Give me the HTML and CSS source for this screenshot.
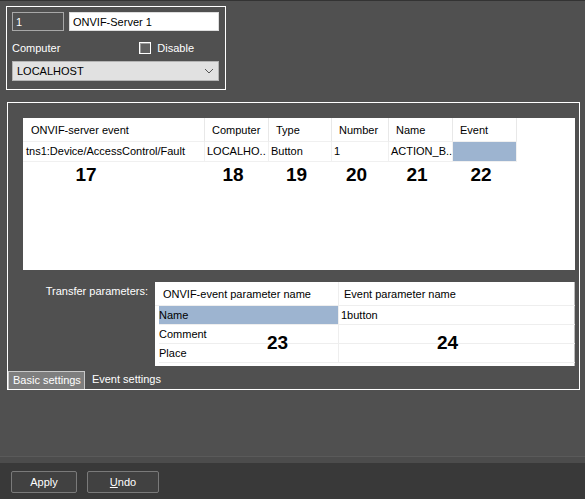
FILE: index.html
```html
<!DOCTYPE html>
<html lang="en">
<head>
    <title>ONVIF-Server settings</title>
    <meta charset="UTF-8">
    <link rel="stylesheet" href="styles.css">
</head>
<body>
<div class="workspace">

    <!-- Server object -->
    <div class="server-box">
        <div class="row">
            <div class="field field-id">1</div>
            <div class="field field-name">ONVIF-Server 1</div>
        </div>
        <div class="row row-computer">
            <span class="label">Computer</span>
            <span class="check"><span class="check-box"></span>Disable</span>
        </div>
        <div class="select">
            <span>LOCALHOST</span>
            <svg width="10" height="6" viewBox="0 0 10 6"><path d="M1 1 L5 5 L9 1" fill="none" stroke="#555" stroke-width="1"/></svg>
        </div>
    </div>

    <!-- Events -->
    <div class="settings-box">
        <div class="events">
            <div class="ev-grid">
                <div class="ev-head">ONVIF-server event</div>
                <div class="ev-head">Computer</div>
                <div class="ev-head">Type</div>
                <div class="ev-head">Number</div>
                <div class="ev-head">Name</div>
                <div class="ev-head">Event</div>

                <div class="ev-cell">tns1:Device/AccessControl/Fault</div>
                <div class="ev-cell">LOCALHO..</div>
                <div class="ev-cell">Button</div>
                <div class="ev-cell">1</div>
                <div class="ev-cell">ACTION_B..</div>
                <div class="ev-cell selected"></div>

                <div class="mark mark-first">17</div>
                <div class="mark">18</div>
                <div class="mark">19</div>
                <div class="mark">20</div>
                <div class="mark">21</div>
                <div class="mark">22</div>
            </div>
        </div>

        <div class="transfer">
            <div class="transfer-label">Transfer parameters:</div>
            <div class="params">
                <div class="p-head">ONVIF-event parameter name</div>
                <div class="p-head">Event parameter name</div>
                <div class="p-cell selected">Name</div>
                <div class="p-cell">1button</div>
                <div class="p-cell">Comment</div>
                <div class="p-cell p-mark"><span class="mark">24</span></div>
                <div class="p-cell p-mark-left">Place<span class="mark">23</span></div>
                <div class="p-cell"></div>
            </div>
        </div>

        <div class="tabs">
            <div class="tab active">Basic settings</div>
            <div class="tab">Event settings</div>
        </div>
    </div>
</div>

<div class="footer">
    <button class="btn btn-apply">Apply</button>
    <button class="btn btn-undo"><u>U</u>ndo</button>
</div>
</body>
</html>
```
FILE: styles.css
```css
body { margin: 0; width: 585px; height: 499px; overflow: hidden; background: #505050; color: #fff;
       font: 11px "Liberation Sans", Arial, sans-serif; display: flex; flex-direction: column;
       border-top: 1px solid #333; box-sizing: border-box; }
.workspace { flex: 1; padding: 5px 0 0 6px; border-left: 2px solid #5c5c5c; margin-left: -2px; }

.server-box { width: 213px; height: 77px; border: 1px solid #fff; padding: 5px 0 0 5px; box-sizing: content-box; }
.row { display: flex; gap: 5px; height: 19px; }
.field { box-sizing: border-box; height: 19px; padding: 2px 3px; line-height: 14px; border: 1px solid #a8a8a8; }
.field-id { width: 52px; background: #505050; color: #fff; }
.field-name { width: 150px; background: #fff; color: #000; border-color: #ddd; }
.row-computer { margin-top: 10px; height: 14px; align-items: center; justify-content: space-between; width: 182px; }
.check { display: flex; align-items: center; gap: 6px; }
.check-box { width: 10px; height: 10px; border: 1px solid #fff; background: #606060; box-shadow: inset 1px 1px 0 #9a9a9a; }
.select { margin-top: 6px; width: 207px; height: 20px; box-sizing: border-box; background: #e1e1e1; border: 1px solid #b4b4b4;
          color: #000; display: flex; align-items: center; justify-content: space-between; padding: 0 4px 0 4px; }

.settings-box { margin-top: 12px; margin-left: 1px; width: 573px; height: 288px; border: 1px solid #fff; padding: 15px 4px 0 15px;
                box-sizing: border-box; }
.events { background: #fff; height: 152px; color: #000; }
.ev-grid { display: grid; grid-template-columns: 182px 64px 63px 57px 64px 64px; width: 494px; }
.ev-head { height: 24px; line-height: 24px; padding-left: 7px; border-right: 1px solid #e8e8e8; border-bottom: 1px solid #f0f0f0; box-sizing: border-box; white-space: nowrap; }
.ev-head:first-child { padding-left: 8px; }
.ev-cell { height: 20px; line-height: 19px; padding-left: 2px; border-right: 1px solid #f0f0f0; border-bottom: 1px solid #f0f0f0; box-sizing: border-box; white-space: nowrap; overflow: hidden; }
.ev-cell:nth-child(7) { padding-left: 3px; }
.selected { background: #9db4d0; }
.mark { font: bold 19px "Liberation Sans", Arial, sans-serif; color: #000; text-align: center; line-height: 25px; padding-right: 8px; }
.mark-first { padding-right: 56px; }

.transfer { display: flex; margin-top: 12px; }
.transfer-label { width: 132px; flex-shrink: 0; text-align: right; padding-top: 3px; padding-right: 7px; box-sizing: border-box; }
.params { background: #fff; color: #000; width: 420px; flex-shrink: 0; height: 84px; display: grid; grid-template-columns: 179px 237px;
          grid-template-rows: 24px 19px 19px 19px; padding-left: 4px; border-right: 1px solid #bbb; box-sizing: border-box; align-content: start; }
.p-head { line-height: 24px; border-bottom: 1px solid #eee; margin-left: -4px; padding-left: 8px; }
.p-head:nth-child(2) { margin-left: 0; padding-left: 5px; border-left: 1px solid #eee; }
.p-cell { line-height: 18px; border-bottom: 1px solid #eee; position: relative; }
.p-cell:nth-child(even) { border-left: 1px solid #eee; padding-left: 2px; }
.p-mark .mark { position: absolute; left: 98px; top: 8px; line-height: 20px; padding: 0; }
.p-mark-left .mark { position: absolute; left: 108px; top: -11px; line-height: 20px; padding: 0; }

.tabs { display: flex; margin: 5px 0 0 -15px; }
.tab { height: 17px; line-height: 17px; padding: 0 5px 0 7px; }
.tab.active { background: #7e7e7e; border: 1px solid #c8c8c8; border-bottom: none; padding: 0 3px 0 4px; }

.footer { height: 42px; box-sizing: border-box; background: #393939; border-top: 6px solid #4c4c4c; box-shadow: 0 -1px 0 #5a5a5a;
          display: flex; gap: 10px; padding: 8px 0 0 11px; }
.btn { height: 22px; background: #414141; color: #fff; border: 1px solid #7a7a7a; border-radius: 2px;
       font: 11px "Liberation Sans", Arial, sans-serif; padding: 0; }
.btn-apply { width: 66px; }
.btn-undo { width: 72px; }
```
